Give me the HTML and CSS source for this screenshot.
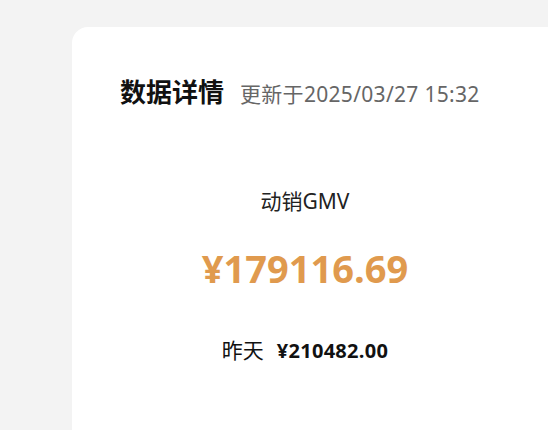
FILE: index.html
```html
<!DOCTYPE html>
<html lang="zh-CN">
<head>
  <meta charset="UTF-8" />
  <meta name="viewport" content="width=device-width, initial-scale=1.0"/>
  <title>数据详情</title>
  <link rel="stylesheet" href="styles.css">
</head>
<body>
  <div class="card">
    <div class="card-head">
      <h3>数据详情</h3>
      <span class="updated">更新于2025/03/27 15:32</span>
    </div>

    <div class="stats">
      <div class="stat">
        <div class="stat-label">动销GMV</div>
        <div class="stat-value">¥179116.69</div>
        <div class="stat-prev">昨天<b>¥210482.00</b></div>
      </div>
    </div>
  </div>
</body>
</html>
```

FILE: styles.css
```css
* {
  margin: 0;
  padding: 0;
  box-sizing: border-box;
}

body {
  font-family: "Noto Sans", "Noto Sans CJK SC", sans-serif;
  background-color: #f3f3f3;
  overflow: hidden;
  height: 430px;
}

.card {
  background-color: #fff;
  margin: 27px 0 0 72px;
  width: 700px;
  height: 600px;
  border-radius: 16px;
  padding: 47px 48px;
}

.card-head {
  display: flex;
  align-items: baseline;
  gap: 16px;
  line-height: 36px;
}

.card-head h3 {
  font-size: 26px;
  font-weight: 700;
  color: #111;
}

.updated {
  font-size: 21px;
  letter-spacing: 0.3px;
  color: #666;
}

.stats {
  display: grid;
  grid-template-columns: 370px;
  margin-top: 75px;
}

.stat {
  text-align: center;
}

.stat-label {
  font-size: 21px;
  line-height: 28px;
  color: #222;
}

.stat-value {
  font-family: "Open Sans", "Noto Sans CJK SC", sans-serif;
  font-size: 38px;
  line-height: 56px;
  font-weight: 700;
  color: #e09a4e;
  margin-top: 25px;
}

.stat-prev {
  font-size: 21px;
  line-height: 28px;
  color: #111;
  margin-top: 40px;
}

.stat-prev b {
  font-family: "Open Sans", "Noto Sans CJK SC", sans-serif;
  font-size: 20px;
  font-weight: 700;
  letter-spacing: 0.3px;
  margin-left: 13px;
}
```
